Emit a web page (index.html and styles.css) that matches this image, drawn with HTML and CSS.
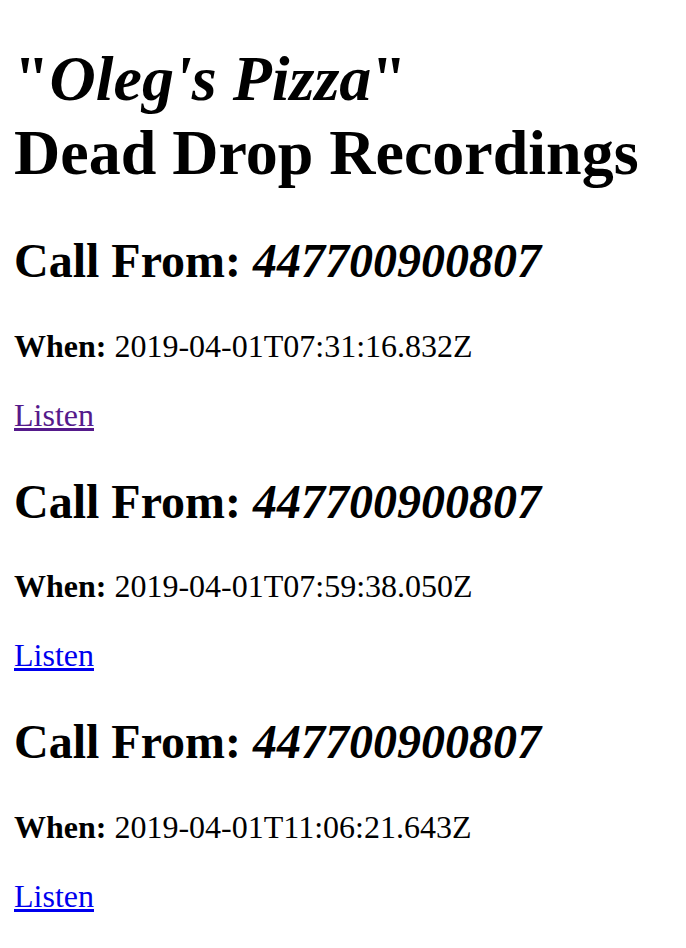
FILE: index.html
```html
<!DOCTYPE html>
<html>
<head>
<meta charset="utf-8">
<title>Dead Drop Recordings</title>
<link rel="stylesheet" href="styles.css">
</head>
<body>
<h1 class="title">"<i>Oleg's Pizza</i>"<br>Dead Drop Recordings</h1>
<div class="call">
  <h2 class="call-from">Call From: <i>447700900807</i></h2>
  <p class="when"><b>When:</b> 2019-04-01T07:31:16.832Z</p>
  <p class="listen"><a class="link visited" href="#">Listen</a></p>
</div>
<div class="call">
  <h2 class="call-from">Call From: <i>447700900807</i></h2>
  <p class="when"><b>When:</b> 2019-04-01T07:59:38.050Z</p>
  <p class="listen"><a class="link" href="#">Listen</a></p>
</div>
<div class="call">
  <h2 class="call-from">Call From: <i>447700900807</i></h2>
  <p class="when"><b>When:</b> 2019-04-01T11:06:21.643Z</p>
  <p class="listen"><a class="link" href="#">Listen</a></p>
</div>
</body>
</html>
```
FILE: styles.css
```css
html {
  background: #ffffff;
}
body {
  margin: 0 14px;
  font-family: "Liberation Serif", "Times New Roman", serif;
  font-size: 32px;
  color: #000000;
}
.title {
  font-size: 64px;
  font-weight: bold;
  margin: 42px 0 42.88px;
}
.call-from {
  font-size: 48px;
  font-weight: bold;
  margin: 39.84px 0;
}
.when,
.listen {
  margin: 32px 0;
}
.link {
  color: #0000ee;
  text-decoration: underline;
}
.link.visited {
  color: #551a8b;
}
```
